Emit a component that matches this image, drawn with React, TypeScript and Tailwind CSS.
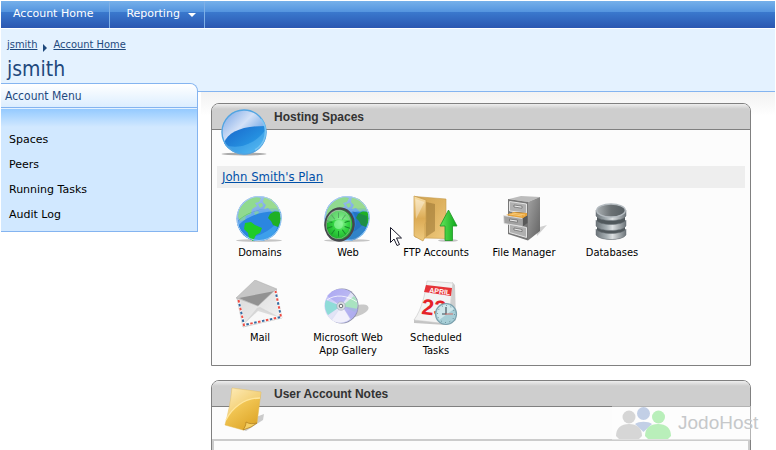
import type { ReactNode } from "react";

const tahoma = "font-['DejaVu_Sans_Condensed','Noto_Sans',sans-serif]";
const verdana = "font-['DejaVu_Sans',sans-serif]";
const arial = "font-['Liberation_Sans',Arial,sans-serif]";

function Globe() {
  return (
    <>
      <defs>
        <linearGradient id="sea" x1="0" y1="0" x2=".4" y2="1">
          <stop offset="0" stopColor="#8db4ec" />
          <stop offset=".45" stopColor="#4387dc" />
          <stop offset="1" stopColor="#46aef0" />
        </linearGradient>
      </defs>
      <ellipse cx="23" cy="45.500" rx="23" ry="1.400" fill="#c4c4c4" />
      <circle cx="23" cy="23.500" r="22.500" fill="url(#sea)" />
      <path d="M1 28C10 18 25 13 45 17c2 12-6 29-22 29C12 46 3 39 1 28z" fill="#2b86e0" />
      <path d="M10 42c10 1 24-5 33-17-1 12-9 21-20 21-5 0-9-1-13-4z" fill="#46aaf0" opacity=".7" />
      <path d="M3 15C7 8 13 3 20 2l5 1-2 4-4 1 2 3-5 3-1 5-5 2-1 4-5 1-2-4z" fill="#5cc95c" />
      <path d="M22 9l4-1 1 3-3 2zM18 17l4-1 1 2-4 2z" fill="#5cc95c" />
      <path d="M28 2l7 2 6 6 3 7-5-2-3 2-4-4-4 1 2-4-3-3z" fill="#6acb5c" />
      <path d="M34 19l5-3 5 1 1 8-3 7-5-2-2-4-3-3z" fill="#1fb026" />
      <path d="M9 28l6-1 4 3 7 3-2 5-4 2-3 6-4-3-1-5-4-4z" fill="#1fcc26" />
      <path d="M1 28C8 18 25 12 44 14l1 3C27 15 10 21 2 31z" fill="#9cc8f8" opacity=".55" />
      <path d="M1 27C1 10 12 1 23 1s18 6 21 13C25 12 8 18 1 27z" fill="#fff" opacity=".32" />
      <circle cx="23" cy="23.500" r="22" fill="none" stroke="#a8cdf2" />
    </>
  );
}

function GlobeIcon() {
  return (
    <svg viewBox="0 0 48 48" className="size-12">
      <Globe />
    </svg>
  );
}

function WebIcon() {
  const spokes = [0, 36, 72, 108, 144, 180, 216, 252, 288, 324];
  return (
    <svg viewBox="0 0 48 48" className="size-12">
      <defs>
        <radialGradient id="dial" cx=".55" cy=".45">
          <stop offset="0" stopColor="#8df593" />
          <stop offset=".5" stopColor="#35d643" />
          <stop offset="1" stopColor="#1fb42d" />
        </radialGradient>
      </defs>
      <Globe />
      <path d="M28 16c6 7 5 20-4 28l6 1c10-6 14-14 13-24z" fill="#1a4f86" opacity=".35" />
      <ellipse cx="15.500" cy="29.500" rx="14" ry="16" fill="url(#dial)" stroke="#45484c" strokeWidth="2.500" transform="rotate(8 15.500 29.500)" />
      <ellipse cx="14.500" cy="29.500" rx="12.300" ry="14.300" fill="none" stroke="#7fae82" strokeWidth=".8" transform="rotate(8 14.500 29.500)" />
      {spokes.map((a) => (
        <path key={a} d="M14.500 23V17.500" stroke="#168a29" strokeWidth="1" transform={`rotate(${a} 14.500 29.500)`} />
      ))}
      <circle cx="14.500" cy="29.500" r="4.500" fill="#8df59a" opacity=".7" />
      <path d="M3 28C3 19 9 14 16 15c6 1 10 6 10 11-7-3-15-2-23 2z" fill="#fff" opacity=".28" />
    </svg>
  );
}

function FtpIcon() {
  return (
    <svg viewBox="0 0 48 48" className="size-12">
      <defs>
        <linearGradient id="folderFront" x1="0" y1="0" x2="0" y2="1">
          <stop offset="0" stopColor="#f8dfa7" />
          <stop offset=".5" stopColor="#dcab55" />
          <stop offset="1" stopColor="#efcb80" />
        </linearGradient>
        <linearGradient id="folderBack" x1="0" y1="0" x2="1" y2="1">
          <stop offset="0" stopColor="#d0a250" />
          <stop offset=".5" stopColor="#ddb15f" />
          <stop offset="1" stopColor="#f0cb7e" />
        </linearGradient>
        <linearGradient id="up" x1="0" y1="0" x2="1" y2="0">
          <stop offset="0" stopColor="#67e65a" />
          <stop offset="1" stopColor="#0ba81a" />
        </linearGradient>
      </defs>
      <ellipse cx="36" cy="45.500" rx="10" ry="1.300" fill="#c4c4c4" />
      <path d="M3 1.500l31 2.500v39.500L12 43 3 42z" fill="url(#folderBack)" stroke="#c59a4b" strokeWidth=".6" />
      <path d="M14 7l9 2v27l-9 6z" fill="#93702f" opacity=".5" />
      <path d="M2 1l12 4v22l-1 2v13l-2 4-9-5z" fill="url(#folderFront)" stroke="#c79b4c" strokeWidth=".7" />
      <path d="M3.500 4l9 3L4 24z" fill="#fff" opacity=".35" />
      <path d="M36.500 15L45 31h-4.500v14.500h-7.500V31H28z" fill="url(#up)" stroke="#209526" strokeWidth=".8" />
    </svg>
  );
}

function CabinetIcon() {
  return (
    <svg viewBox="0 0 48 48" className="size-12">
      <defs>
        <linearGradient id="steel" x1="0" y1="0" x2="1" y2="1">
          <stop offset="0" stopColor="#a2a2a2" />
          <stop offset="1" stopColor="#626262" />
        </linearGradient>
      </defs>
      <path d="M36 33l11-3-10 11z" fill="#d0d0d0" />
      <path d="M9 4L21 1l19 1-12 5z" fill="#bcbcbc" />
      <path d="M28 7l12-5v34L28 45.500z" fill="url(#steel)" />
      <path d="M8 4l20 3v38.500L8 39z" fill="#777" />
      <path d="M9.500 6.500l17 2.500v9l-17-2zM9.500 29l17 3.500v10l-17-5z" fill="#b0b0b0" stroke="#ededed" strokeWidth=".9" />
      <path d="M14 10l8 1.200v2l-8-1.200zM14 33l8 1.500v2L14 35z" fill="#ececec" stroke="#555" strokeWidth=".6" />
      <path d="M8 20l8-3 11 1v5l-4 2z" fill="#3d3d3d" />
      <path d="M6 20l8-3 13 1v3l-5 3z" fill="#e7a33b" />
      <path d="M9 19l13 2M12 18l13 2" stroke="#fbd385" strokeWidth=".8" />
      <path d="M3.500 20.500l19 3v8L4 28.500z" fill="#a2a2a2" stroke="#e5e5e5" strokeWidth=".9" />
      <path d="M22.500 23.500l5-3V28l-5 3.500z" fill="#595959" />
      <path d="M9.500 24l8 1.200v2L9.500 26z" fill="#ececec" stroke="#555" strokeWidth=".6" />
    </svg>
  );
}

function DatabaseIcon() {
  return (
    <svg viewBox="0 0 48 48" className="size-12">
      <defs>
        <linearGradient id="metal">
          <stop offset="0" stopColor="#6b7378" />
          <stop offset=".35" stopColor="#a7b0b4" />
          <stop offset=".55" stopColor="#dce0e2" />
          <stop offset="1" stopColor="#6d757a" />
        </linearGradient>
        <linearGradient id="hollow">
          <stop offset="0" stopColor="#aab0b3" />
          <stop offset=".5" stopColor="#6b7174" />
          <stop offset="1" stopColor="#565e62" />
        </linearGradient>
      </defs>
      <path d="M9 17v23c5 6 24 6 28 0V17z" fill="#50585c" />
      {[34, 25, 15].map((y) => (
        <path
          key={y}
          d={`M8 ${y}c3 6 27 6 30 0v6c-3 6-27 6-30 0z`}
          fill="url(#metal)"
          stroke="#6a7378"
          strokeWidth=".5"
        />
      ))}
      <ellipse cx="23" cy="15.500" rx="14.300" ry="6.500" fill="url(#hollow)" stroke="#b4bbc0" strokeWidth="1.400" />
    </svg>
  );
}

function MailIcon() {
  return (
    <svg viewBox="0 0 48 48" className="size-12">
      <defs>
        <linearGradient id="paper" x1="0" y1="0" x2="1" y2="1">
          <stop offset="0" stopColor="#d9d9d9" />
          <stop offset="1" stopColor="#f4f4f4" />
        </linearGradient>
      </defs>
      <path d="M0 18L19 0l22 9-19 17z" fill="#c6c6c6" stroke="#aaa" strokeWidth=".5" />
      <path d="M3 18l36-7-17 15z" fill="#929292" />
      <path d="M1 18l21 8L40 9l6 29-39 9z" fill="url(#paper)" stroke="#b0b0b0" strokeWidth=".6" />
      <path d="M7 45l16-16 22 9z" fill="#f8f8f8" />
      <path d="M7 45l15-14 23 7-21-11-3 1z" fill="#cfcfcf" opacity=".7" />
      <path d="M2.500 20l5.500 25 37-8-5.500-26" fill="none" stroke="#f8f8f8" strokeWidth="2.600" />
      <path d="M2.500 20l5.500 25 37-8-5.500-26" fill="none" stroke="#ee4b42" strokeWidth="2" strokeDasharray="2.500 5.500" />
      <path d="M2.500 20l5.500 25 37-8-5.500-26" fill="none" stroke="#34699f" strokeWidth="2" strokeDasharray="2.500 5.500" strokeDashoffset="-4" />
    </svg>
  );
}

function DiscIcon() {
  return (
    <svg viewBox="0 0 48 48" className="size-12">
      <defs>
        <linearGradient id="disc" x1="0" y1="0" x2="1" y2="1">
          <stop offset="0" stopColor="#b4b2f7" />
          <stop offset=".5" stopColor="#e3e5f6" />
          <stop offset="1" stopColor="#b4b2ee" />
        </linearGradient>
      </defs>
      <ellipse cx="32" cy="31" rx="13" ry="5.500" fill="#c9c9c9" transform="rotate(-17 32 31)" />
      <ellipse cx="18" cy="26" rx="16.500" ry="17.500" fill="#8c8fa7" />
      <ellipse cx="17" cy="26" rx="16.500" ry="17" fill="url(#disc)" />
      <path d="M17 26L2 20c-2 5-1 10 2 15z" fill="#8fdcd8" />
      <path d="M18 26l12-10c4 5 5 10 1 16z" fill="#a9e3c0" />
      <path d="M17 26L3 16C9 8 20 7 27 12z" fill="#a29df0" opacity=".6" />
      <path d="M18 26L8 40c6 4 14 3 18-1z" fill="#f1f0fb" />
      <path d="M18 26l9 13c4-3 6-6 7-10z" fill="#a5a2ee" opacity=".7" />
      <path d="M3 20c8-6 20-5 30 2" fill="none" stroke="#fff" opacity=".75" />
      <circle cx="17" cy="26" r="4.200" fill="#dce0e4" stroke="#a5abc0" strokeWidth=".7" />
      <circle cx="17" cy="26" r="1.800" fill="#fafafa" stroke="#595f66" strokeWidth=".9" />
    </svg>
  );
}

function CalendarIcon() {
  return (
    <svg viewBox="0 0 48 48" className="size-12">
      <path d="M40 2l3 3 1 35-6 4z" fill="#cfcfcf" />
      <path d="M2 40l34 3-2 2-32-2z" fill="#c4c4c4" />
      <path d="M15 1l26 2-5 41-34-4c8-11 11-26 13-39z" fill="#f3f3f3" stroke="#c6c6c6" strokeWidth=".6" />
      <path d="M14 5l26 3-1 8-27-4z" fill="#e63338" />
      <text x="17" y="12.500" fontSize="7" fontWeight="bold" fill="#fff" className={arial} transform="rotate(7 17 12.500)">
        APRIL
      </text>
      <text x="9" y="34" fontSize="22" fontWeight="bold" fill="#e52228" className={arial} transform="rotate(6 9 34)">
        23
      </text>
      <circle cx="34" cy="34" r="10.500" fill="#a7ced7" stroke="#7ba1ae" strokeWidth="1.200" />
      <path d="M26 29c4-6 12-6 16 0L27 40c-2-3-3-7-1-11z" fill="#e5f5f7" opacity=".65" />
      <circle cx="34" cy="34" r="8.500" fill="none" stroke="#52747f" strokeDasharray=".8 3.650" />
      <path d="M34 27v7h-4" fill="none" stroke="#3a4b54" strokeWidth="1.100" />
      <path d="M33 34h8" stroke="#d66661" strokeWidth=".9" />
    </svg>
  );
}

function OrbIcon() {
  return (
    <svg viewBox="0 0 48 48" className="size-12">
      <defs>
        <linearGradient id="orbTop" x1="0" y1="0" x2="1" y2="1">
          <stop offset="0" stopColor="#6f9fe4" />
          <stop offset=".4" stopColor="#d3e1f7" />
          <stop offset=".8" stopColor="#4e94e0" />
        </linearGradient>
        <linearGradient id="orbLow" x1="0" y1="0" x2="1" y2="1">
          <stop offset="0" stopColor="#1865ca" />
          <stop offset=".6" stopColor="#2590e0" />
          <stop offset="1" stopColor="#5cc4f5" />
        </linearGradient>
      </defs>
      <ellipse cx="24" cy="46" rx="22.500" ry="1.400" fill="#aaa" />
      <circle cx="24" cy="24" r="22.500" fill="url(#orbTop)" />
      <path d="M4 35c4-11 18-17 41-17 2 15-8 28-21 28-8 0-16-4-20-11z" fill="url(#orbLow)" />
      <path d="M5 37c14 5 31-1 41-16 0 14-9 25-22 25-7 0-14-3-19-9z" fill="#59b8f1" opacity=".5" />
      <circle cx="24" cy="24" r="22" fill="none" stroke="#52a5e1" strokeWidth="1.300" />
      <path d="M41 11a21 21 0 0 1-6 31" fill="none" stroke="#88d1f8" strokeWidth="1.500" opacity=".7" />
    </svg>
  );
}

function NoteIcon() {
  return (
    <svg viewBox="0 0 48 48" className="size-12">
      <defs>
        <linearGradient id="note" x1="0" y1="0" x2=".6" y2="1">
          <stop offset="0" stopColor="#ffe8a8" />
          <stop offset=".5" stopColor="#f1c553" />
          <stop offset="1" stopColor="#dfa82b" />
        </linearGradient>
      </defs>
      <path d="M36 32l8-3-1 6-17 11-8-3z" fill="#cbcbcb" />
      <path d="M12 3l29 4-4 31-6 1-8 6-18-5C8 29 11 16 12 3z" fill="url(#note)" stroke="#e4b84d" strokeWidth=".5" />
      <path d="M12 3l29 4-1 6C24 13 12 23 6 35 9 25 11 14 12 3z" fill="#fff" opacity=".25" />
      <path d="M40 13C24 13 12 23 6 35" fill="none" stroke="#ffe69c" strokeWidth="1.300" />
      <path d="M23 45c2-3 3-5 3-8 3 2 7 2 11 1l-6 4z" fill="#f5d065" stroke="#b58320" strokeWidth=".8" />
    </svg>
  );
}

const menu = ["Spaces", "Peers", "Running Tasks", "Audit Log"];

const tools = [
  { label: "Domains", icon: <GlobeIcon /> },
  { label: "Web", icon: <WebIcon /> },
  { label: "FTP Accounts", icon: <FtpIcon /> },
  { label: "File Manager", icon: <CabinetIcon /> },
  { label: "Databases", icon: <DatabaseIcon /> },
  { label: "Mail", icon: <MailIcon /> },
  { label: "Microsoft Web App Gallery", icon: <DiscIcon /> },
  { label: "Scheduled Tasks", icon: <CalendarIcon /> },
];

function Panel({ title, icon, children }: { title: string; icon: ReactNode; children: ReactNode }) {
  return (
    <section className="rounded-t-lg border border-[#808080] bg-[#fcfcfc]">
      <header className="flex h-[26px] items-start gap-1.5 rounded-t-[7px] border-b border-[#808080] bg-linear-to-b from-[#eeeeee] to-[#cecece] to-20% pl-2">
        <div className="relative mt-1 shrink-0">{icon}</div>
        <h2 className={`${arial} mt-1 text-xs leading-[18px] font-bold text-[#333]`}>{title}</h2>
      </header>
      {children}
    </section>
  );
}

function Watermark() {
  return (
    <div className="absolute top-[406px] right-[13px] flex h-[34px] w-[151px] items-center bg-white/40">
      <svg viewBox="0 0 56 32" className="ml-1 h-8 w-14 shrink-0">
        <circle cx="27.500" cy="6.500" r="6.500" fill="#c2cfe6" />
        <path d="M19 17c4-3 13-3 17 0l-8.500 8z" fill="#c2cfe6" />
        <circle cx="13" cy="10" r="6.500" fill="#d6d6d6" />
        <path d="M0 29c0-8 5-12 13-12s13 4 13 12l-3 3H3z" fill="#d6d6d6" />
        <circle cx="42.500" cy="10" r="6.500" fill="#b9efba" />
        <path d="M29 29c0-8 5-12 13-12s13 4 13 12l-3 3H32z" fill="#b9efba" />
      </svg>
      <span className={`${arial} ml-1.5 text-[19px] leading-5 text-[#c6c8ca]`}>JodoHost</span>
    </div>
  );
}

export default function App() {
  return (
    <div className="relative h-screen overflow-hidden bg-white px-px pt-px">
      <nav className={`${verdana} flex h-[27px] bg-linear-to-b from-[#76b0ea] from-0% via-[#5293de] via-42% to-[#5293de] to-42% text-[11px] text-white`}>
        <div className="flex grow bg-linear-to-b from-transparent from-42% via-[#3a78cd] via-42% to-[#2b57b1]">
          <a href="#home" className="flex items-center border-r border-[#7fb0e6] pr-4 pl-3">
            Account Home
          </a>
          <a href="#reporting" className="flex items-center gap-2 border-r border-[#7fb0e6] pr-2 pl-4">
            Reporting
            <svg viewBox="0 0 8 4" className="h-1 w-2">
              <path d="M0 0h8L4 4z" fill="#fff" />
            </svg>
          </a>
        </div>
      </nav>

      <header className="mt-px h-[63px] border-b border-[#84b4f0] bg-[#e4f2ff] px-1.5 pt-2 text-[#1f497d]">
        <div className={`${tahoma} flex items-center gap-1.5 text-[11px] leading-4`}>
          <a href="#jsmith" className="underline">jsmith</a>
          <svg viewBox="0 0 4 8" className="mt-1.5 h-2 w-1">
            <path d="M0 0l4 4-4 4z" fill="#1f497d" />
          </svg>
          <a href="#home" className="underline">Account Home</a>
        </div>
        <h1 className={`${tahoma} mt-1 text-[21px] leading-6`}>jsmith</h1>
      </header>

      <div className="flex items-start">
        <aside className="relative -mt-[9px] w-[197px] shrink-0 rounded-tr-lg border-t border-r border-b border-[#84b4f0] bg-[#d1e8ff] pb-1">
          <h2 className={`${tahoma} flex h-[23px] items-center rounded-tr-[7px] bg-linear-to-b from-white to-[#dceeff] pl-1 text-xs text-[#1f497d]`}>
            Account Menu
          </h2>
          <div className="border-t border-[#84b4f0] bg-[#e4f2ff] pt-px">
            <div className="h-[18px] bg-linear-to-b from-[#94caff] to-[#d1e8ff]" />
          </div>
          <ul className={`${verdana} text-[11px] leading-[25px] text-black`}>
            {menu.map((item) => (
              <li key={item}>
                <a href="#menu" className="block pl-2">{item}</a>
              </li>
            ))}
          </ul>
        </aside>

        <main className="ml-[3px] flex min-w-0 grow flex-col gap-[14px] bg-linear-to-b from-[#f2f2f2] to-white to-[24px] pt-[11px] pr-6 pl-2.5">
          <Panel title="Hosting Spaces" icon={<OrbIcon />}>
            <div className="px-[5px] pt-9">
              <div className={`${tahoma} bg-[#eeeeee] px-[5px] text-[13px] leading-[22px]`}>
                <a href="#plan" className="text-[#0050a8] underline">John Smith's Plan</a>
              </div>
              <ul className="-ml-px flex flex-wrap pt-[7px] pr-16">
                {tools.map((tool) => (
                  <li key={tool.label} className="min-h-[85px] w-[88px]">
                    <a href="#tool" className={`${tahoma} flex flex-col items-center gap-[3px] px-1 text-center text-[11px] leading-[13px] text-black`}>
                      {tool.icon}
                      {tool.label}
                    </a>
                  </li>
                ))}
              </ul>
            </div>
          </Panel>
          <Panel title="User Account Notes" icon={<NoteIcon />}>
            <div className="mt-8 h-20 border-2 border-[#cccccc]" />
          </Panel>
        </main>
      </div>

      <Watermark />
      <svg viewBox="0 0 12 20" className="absolute top-[227px] left-[390px] h-5 w-3">
        <path d="M.5.5v15l3.500-3.500 3 6.500 2.500-1-3-6.500h5z" fill="#fff" stroke="#1a1a2a" />
      </svg>
    </div>
  );
}
